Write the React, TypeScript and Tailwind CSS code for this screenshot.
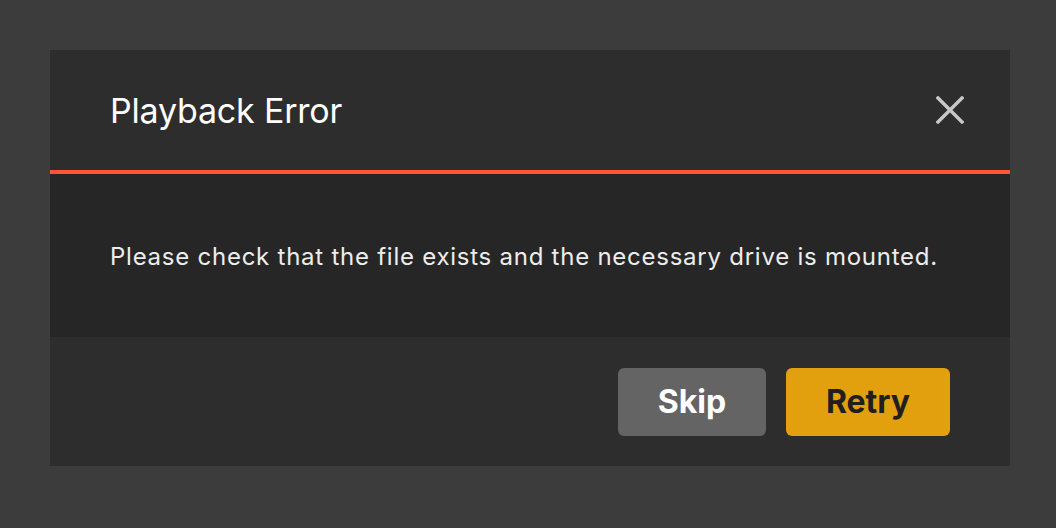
export default function App() {
  return (
    <div className="min-h-[528px] w-full bg-[#3c3c3c] p-[50px_46px_62px_50px]" style={{ fontFamily: 'Inter, "Noto Sans", sans-serif' }}>
      <div className="w-[960px] flex flex-col">
        {/* Header */}
        <div className="h-[120px] bg-[#2d2d2d] flex items-center justify-between pl-[60px] pr-[46px]">
          <h1 className="text-[34px] text-white leading-none tracking-[-0.2px] pt-[2px]">Playback Error</h1>
          <button className="w-[28px] h-[28px] flex items-center justify-center text-[#c8c8c8]">
            <svg width="28" height="28" viewBox="0 0 28 28" fill="none" stroke="currentColor" strokeWidth="3.4" strokeLinecap="square">
              <path d="M2 2L26 26M26 2L2 26" />
            </svg>
          </button>
        </div>
        <div className="h-[4px] bg-[#ff5533]" />

        {/* Body */}
        <div className="h-[163px] bg-[#262626] flex items-center px-[60px] pt-[3px]">
          <p className="text-[24px] text-[#ededed] leading-none tracking-[0.75px]">
            Please check that the file exists and the necessary drive is mounted.
          </p>
        </div>

        {/* Footer */}
        <div className="h-[129px] bg-[#2d2d2d] flex items-center justify-end gap-[20px] pr-[60px]">
          <button className="w-[148px] h-[68px] rounded-[6px] bg-[#646464] text-white text-[32px] font-bold">Skip</button>
          <button className="w-[164px] h-[68px] rounded-[6px] bg-[#e2a00e] text-[#1f1f1f] text-[32px] font-bold">Retry</button>
        </div>
      </div>
    </div>
  )
}
